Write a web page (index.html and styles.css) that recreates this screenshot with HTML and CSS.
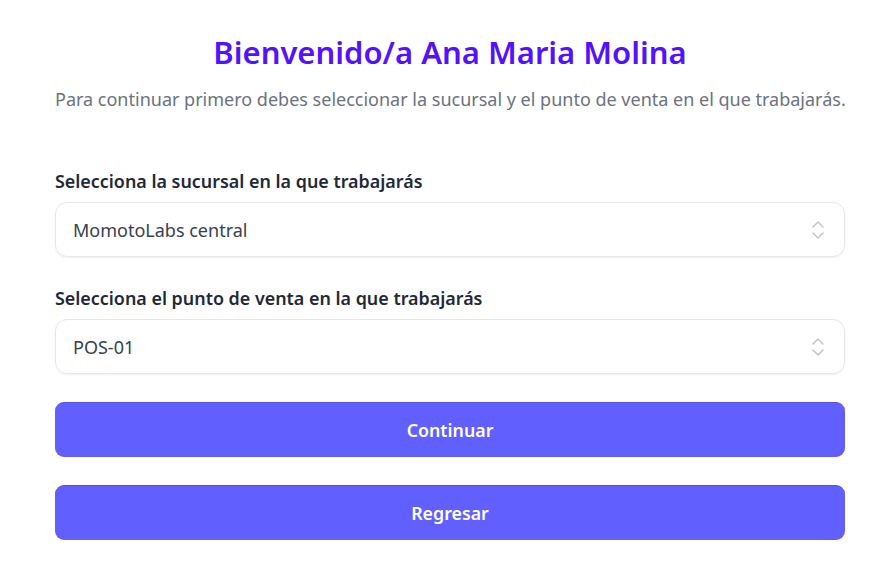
FILE: index.html
```html
<!DOCTYPE html>
<html lang="es">
<head>
<meta charset="utf-8">
<link rel="stylesheet" href="styles.css">
</head>
<body>
<main class="page">
  <h1 class="title">Bienvenido/a Ana Maria Molina</h1>
  <p class="subtitle">Para continuar primero debes seleccionar la sucursal y el punto de venta en el que trabajarás.</p>
  <form class="form">
    <label class="field">
      <span class="label">Selecciona la sucursal en la que trabajarás</span>
      <span class="select">
        <span class="value">MomotoLabs central</span>
        <svg class="chev" width="16" height="22" viewBox="0 0 16 22" fill="none" stroke="#c4c7cc" stroke-width="1.6" stroke-linecap="round" stroke-linejoin="round"><path d="M3 8l5-5 5 5"/><path d="M3 14l5 5 5-5"/></svg>
      </span>
    </label>
    <label class="field">
      <span class="label">Selecciona el punto de venta en la que trabajarás</span>
      <span class="select">
        <span class="value">POS-01</span>
        <svg class="chev" width="16" height="22" viewBox="0 0 16 22" fill="none" stroke="#c4c7cc" stroke-width="1.6" stroke-linecap="round" stroke-linejoin="round"><path d="M3 8l5-5 5 5"/><path d="M3 14l5 5 5-5"/></svg>
      </span>
    </label>
    <button type="button" class="btn">Continuar</button>
    <button type="button" class="btn">Regresar</button>
  </form>
</main>
</body>
</html>
```
FILE: styles.css
```css
* { box-sizing: border-box; }
html, body { margin: 0; padding: 0; background: #fff; }
body { font-family: "Noto Sans", "Open Sans", sans-serif; }
.page {
  width: 790px;
  margin: 0 0 0 55px;
  padding-top: 30px;
  display: flex;
  flex-direction: column;
}
.title {
  margin: 0;
  text-align: center;
  color: #5311ff;
  font-size: 31px;
  font-weight: 600;
  line-height: 44px;
}
.subtitle {
  margin: 12px 0 0;
  text-align: center;
  color: #6b7280;
  font-size: 18px;
  line-height: 27px;
  white-space: nowrap;
}
.form {
  margin-top: 56px;
  display: flex;
  flex-direction: column;
}
.field {
  display: flex;
  flex-direction: column;
  margin-bottom: 29px;
}
.field:last-of-type {
  margin-bottom: 28px;
}
.label {
  color: #1f2937;
  font-size: 17.9px;
  font-weight: 600;
  line-height: 24px;
  margin-bottom: 9px;
}
.select {
  height: 55px;
  border: 1px solid #e5e7eb;
  border-radius: 12px;
  box-shadow: 0 1px 2px rgba(0,0,0,0.06);
  display: flex;
  align-items: center;
  justify-content: space-between;
  padding: 0 18px 0 17px;
}
.value {
  color: #374151;
  font-size: 18px;
}
.btn {
  height: 55px;
  border: none;
  border-top: 1px solid #5652e6;
  border-radius: 9px;
  background: #625fff;
  color: #fff;
  font-family: inherit;
  font-size: 17.8px;
  font-weight: 600;
  margin-bottom: 28px;
}
```
